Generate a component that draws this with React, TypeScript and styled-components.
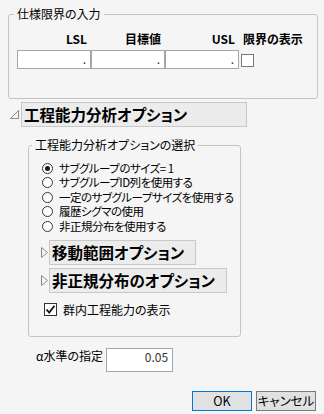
import styled, { createGlobalStyle } from "styled-components";

const GlobalStyle = createGlobalStyle`
  html, body {
    margin: 0;
    padding: 0;
    background: #f5f5f5;
  }
  body {
    font-family: "Noto Sans CJK JP", "Noto Sans", sans-serif;
    font-feature-settings: "palt" 1;
    font-size: 12px;
    color: #000;
  }
`;

const Page = styled.div`
  width: 324px;
  height: 414px;
  box-sizing: border-box;
  padding-top: 6px;
  display: flex;
  flex-direction: column;
`;

const Group = styled.fieldset<{ $left: number; $width: number; $pad: string }>`
  margin: 0 0 0 ${(p) => p.$left}px;
  width: ${(p) => p.$width}px;
  box-sizing: border-box;
  padding: ${(p) => p.$pad};
  border: 1px solid #c4c4c4;
  border-radius: 3px;
  min-inline-size: 0;
`;

const Legend = styled.legend<{ $offset: number }>`
  margin-left: ${(p) => p.$offset}px;
  padding: 0 3px;
  line-height: 16px;
  font-size: 12px;
`;

const LimitGrid = styled.div`
  display: grid;
  grid-template-columns: 74px 74px 74px auto;
  row-gap: 3px;
`;

const ColHead = styled.div<{ $left?: boolean }>`
  font-weight: bold;
  line-height: 16px;
  text-align: ${(p) => (p.$left ? "left" : "right")};
  padding: ${(p) => (p.$left ? "0 0 0 4px" : "0 4px 0 0")};
  white-space: nowrap;
`;

const Field = styled.div<{ $w?: number; $h?: number }>`
  width: ${(p) => p.$w ?? 74}px;
  height: ${(p) => p.$h ?? 19}px;
  box-sizing: border-box;
  border: 1px solid #a6a6a6;
  background: #fff;
  text-align: right;
  padding-right: 4px;
  line-height: 15px;
  font-size: 12px;
  color: #333;
`;

const Box = styled.div<{ $border: string }>`
  width: 13px;
  height: 13px;
  flex-shrink: 0;
  box-sizing: border-box;
  border: 1px solid ${(p) => p.$border};
  background: #fff;
  display: flex;
  align-items: center;
  justify-content: center;
`;

const CheckCell = styled.div`
  padding: 4px 0 0 2px;
`;

const Disclosure = styled.div<{ $left: number; $gap: number }>`
  display: flex;
  align-items: center;
  margin-left: ${(p) => p.$left}px;
  gap: ${(p) => p.$gap}px;
`;

const Header = styled.div<{ $width?: number }>`
  ${(p) => (p.$width ? `width: ${p.$width}px;` : "")}
  height: 25px;
  box-sizing: border-box;
  background: #ececec;
  border: 1px solid #c8c8c8;
  font-weight: bold;
  font-size: 15.5px;
  line-height: 22px;
  padding: 0 11px 0 2px;
  white-space: nowrap;
`;

const RadioList = styled.div`
  display: flex;
  flex-direction: column;
  padding-top: 8px;
`;

const RadioRow = styled.div`
  display: flex;
  align-items: center;
  height: 14.5px;
  line-height: 13px;
  font-size: 11.5px;
  letter-spacing: -0.5px;
  white-space: nowrap;
`;

const Radio = styled.span<{ $on?: boolean }>`
  width: 11px;
  height: 11px;
  flex-shrink: 0;
  box-sizing: border-box;
  border-radius: 50%;
  border: 1px solid #333;
  background: #fff;
  margin: 0 6px 0 1px;
  display: flex;
  align-items: center;
  justify-content: center;
  &::after {
    content: "";
    display: ${(p) => (p.$on ? "block" : "none")};
    width: 5px;
    height: 5px;
    border-radius: 50%;
    background: #1a1a1a;
  }
`;

const SubStack = styled.div`
  display: flex;
  flex-direction: column;
  gap: 3px;
  margin-top: 6px;
`;

const CheckRow = styled.div`
  display: flex;
  align-items: center;
  gap: 6px;
  margin: 10px 0 0 3px;
  line-height: 14px;
`;

const InnerBody = styled.div`
  padding: 0 0 19px 12px;
`;

const AlphaRow = styled.div`
  display: flex;
  align-items: flex-start;
  margin: 11px 0 0 36px;
  gap: 3px;
`;

const AlphaLabel = styled.span`
  line-height: 14px;
  padding-top: 1px;
`;

const Buttons = styled.div`
  display: flex;
  justify-content: flex-end;
  gap: 4px;
  margin: 19px 8px 0 0;
`;

const Button = styled.div<{ $primary?: boolean }>`
  width: 60px;
  height: 20px;
  box-sizing: border-box;
  border: 1px solid ${(p) => (p.$primary ? "#0078d7" : "#7a7a7a")};
  background: #e1e1e1;
  text-align: center;
  line-height: 17px;
  font-size: 12.5px;
`;

const OpenTri = () => (
  <svg width="9" height="9" viewBox="0 0 9 9">
    <polygon points="8.5,0.5 8.5,8.5 0.5,8.5" fill="none" stroke="#8a8a8a" />
  </svg>
);

const ClosedTri = () => (
  <svg width="7" height="11" viewBox="0 0 7 11">
    <polygon points="0.5,0.5 6.5,5.5 0.5,10.5" fill="none" stroke="#8a8a8a" />
  </svg>
);

const Check = () => (
  <svg width="11" height="11" viewBox="0 0 11 11">
    <path d="M1.5 5.5 L4.2 8.5 L9.5 1.8" fill="none" stroke="#111" strokeWidth="1.8" />
  </svg>
);

const radios = [
  "サブグループのサイズ= 1",
  "サブグループID列を使用する",
  "一定のサブグループサイズを使用する",
  "履歴シグマの使用",
  "非正規分布を使用する",
];

export default function App() {
  return (
    <>
      <GlobalStyle />
      <Page>
        <Group $left={8} $width={310} $pad="9px 8px 29px 8px">
          <Legend $offset={-3}>仕様限界の入力</Legend>
          <LimitGrid>
            <ColHead>LSL</ColHead>
            <ColHead>目標値</ColHead>
            <ColHead>USL</ColHead>
            <ColHead $left>限界の表示</ColHead>
            <Field>.</Field>
            <Field>.</Field>
            <Field>.</Field>
            <CheckCell>
              <Box $border="#7a7a7a" />
            </CheckCell>
          </LimitGrid>
        </Group>

        <Disclosure $left={10} $gap={2} style={{ marginTop: 3 }}>
          <OpenTri />
          <Header $width={226}>工程能力分析オプション</Header>
        </Disclosure>

        <Group $left={28} $width={213} $pad="0" style={{ marginTop: 10 }}>
          <Legend $offset={3}>工程能力分析オプションの選択</Legend>
          <InnerBody>
            <RadioList>
              {radios.map((r, i) => (
                <RadioRow key={r}>
                  <Radio $on={i === 0} />
                  {r}
                </RadioRow>
              ))}
            </RadioList>
            <SubStack>
              <Disclosure $left={0} $gap={1}>
                <ClosedTri />
                <Header>移動範囲オプション</Header>
              </Disclosure>
              <Disclosure $left={0} $gap={1}>
                <ClosedTri />
                <Header>非正規分布のオプション</Header>
              </Disclosure>
            </SubStack>
            <CheckRow>
              <Box $border="#333">
                <Check />
              </Box>
              群内工程能力の表示
            </CheckRow>
          </InnerBody>
        </Group>

        <AlphaRow>
          <AlphaLabel>α水準の指定</AlphaLabel>
          <Field $w={67} $h={24}>0.05</Field>
        </AlphaRow>

        <Buttons>
          <Button $primary>OK</Button>
          <Button>キャンセル</Button>
        </Buttons>
      </Page>
    </>
  );
}
